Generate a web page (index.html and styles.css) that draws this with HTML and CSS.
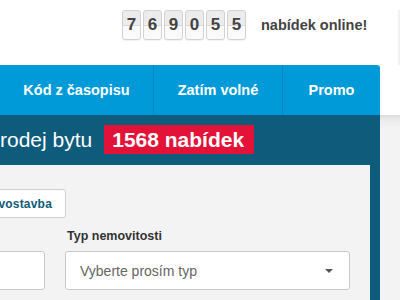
FILE: index.html
```html
<!DOCTYPE html>
<html lang="cs">
<head>
<meta charset="utf-8">
<link rel="stylesheet" href="styles.css">
</head>
<body>
<header class="top">
  <div class="top-inner">
    <div class="counter">
      <span class="digit">7</span><span class="digit">6</span><span class="digit">9</span><span class="digit">0</span><span class="digit">5</span><span class="digit">5</span>
    </div>
    <span class="online">nabídek online!</span>
  </div>
</header>
<div class="nav-row">
  <nav class="nav">
    <a class="nav-item">Kód z časopisu</a>
    <a class="nav-item">Zatím volné</a>
    <a class="nav-item">Promo</a>
  </nav>
</div>
<div class="lower">
  <main class="main">
    <div class="title-row">
      <h1 class="title">Prodej bytu</h1>
      <span class="badge">1568 nabídek</span>
    </div>
    <section class="panel">
      <button class="btn">Novostavba</button>
      <div class="form-row">
        <div class="field">
          <label class="label">&nbsp;</label>
          <div class="input"></div>
        </div>
        <div class="field">
          <label class="label">Typ nemovitosti</label>
          <div class="select">
            <span class="placeholder">Vyberte prosím typ</span>
            <span class="caret"></span>
          </div>
        </div>
      </div>
    </section>
  </main>
</div>
</body>
</html>
```
FILE: styles.css
```css
* { box-sizing: border-box; }
html, body { margin: 0; padding: 0; }
body {
  width: 400px;
  height: 300px;
  overflow: hidden;
  background: #fff;
  font-family: "Liberation Sans", Arial, sans-serif;
}
.top {
  height: 65px;
  background: #fff;
  padding-top: 10px;
}
.top-inner {
  width: 400px;
  height: 57px;
  border-right: 2px solid #f1f1f1;
  display: flex;
  align-items: flex-start;
  padding-left: 122px;
}
.counter {
  display: flex;
  gap: 2px;
}
.digit {
  width: 19px;
  height: 30px;
  border: 1px solid #d2d2d2;
  border-radius: 3px;
  background: linear-gradient(to bottom, #ececec 0, #ececec 14px, #d8d8d8 14px, #d8d8d8 15px, #fafafa 15px, #fafafa 100%);
  color: #444;
  font-weight: bold;
  font-size: 17px;
  line-height: 28px;
  text-align: center;
  box-shadow: 0 1px 1px rgba(0,0,0,0.06);
}
.online {
  margin-left: 15px;
  font-weight: bold;
  font-size: 14.5px;
  line-height: 30px;
  color: #444;
}
.nav-row {
  height: 50px;
  background: #fff;
}
.nav {
  width: 380px;
  height: 50px;
  background: #009ad9;
  border-top-right-radius: 3px;
  display: grid;
  grid-template-columns: 153px 129px 98px;
}
.nav-item {
  display: flex;
  align-items: center;
  justify-content: center;
  color: #fff;
  font-weight: bold;
  font-size: 14.5px;
  border-left: 1px solid #0a86be;
}
.nav-item:first-child { border-left: 0; }
.lower {
  height: 185px;
  background: linear-gradient(to bottom, #dcdcdc 0, #ededed 6px, #f3f3f3 14px, #f3f3f3 100%);
}
.main {
  width: 380px;
  height: 185px;
  background: #0e5b7c;
  padding-top: 10px;
}
.title-row {
  display: flex;
  align-items: center;
  height: 29px;
  margin-left: -14px;
}
.title {
  margin: 0;
  font-weight: normal;
  font-size: 21px;
  color: #fff;
  line-height: 29px;
}
.badge {
  margin-left: 12px;
  background: #e31238;
  color: #fff;
  font-weight: bold;
  font-size: 21px;
  line-height: 29px;
  padding: 0 10px 0 8px;
}
.panel {
  margin-top: 11px;
  width: 370px;
  height: 135px;
  background: #f3f3f3;
  padding-top: 24px;
}
.btn {
  display: block;
  margin-left: -33px;
  height: 29px;
  padding: 0 13px 0 14px;
  background: #fff;
  border: 1px solid #cfcfcf;
  border-radius: 3px;
  color: #0e5b7c;
  font-family: "Liberation Sans", Arial, sans-serif;
  font-weight: bold;
  font-size: 12px;
  letter-spacing: 0.2px;
}
.form-row {
  margin-top: 11px;
  margin-left: -105px;
  display: grid;
  grid-template-columns: 150px 285px;
  gap: 20px;
}
.field { display: flex; flex-direction: column; }
.label {
  display: block;
  font-weight: bold;
  font-size: 12.5px;
  color: #333;
  line-height: 15px;
  margin-bottom: 7px;
  padding-left: 2px;
}
.input, .select {
  height: 39px;
  background: #fff;
  border: 1px solid #cacaca;
  border-radius: 3px;
}
.select {
  display: flex;
  align-items: center;
  justify-content: space-between;
  padding: 0 16px 0 14px;
}
.placeholder {
  font-size: 14px;
  color: #666;
}
.caret {
  width: 0;
  height: 0;
  border-left: 4px solid transparent;
  border-right: 4px solid transparent;
  border-top: 4px solid #555;
}
```
